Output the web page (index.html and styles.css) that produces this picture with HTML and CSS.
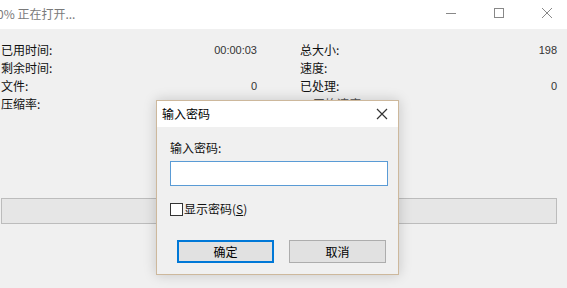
FILE: index.html
```html
<!DOCTYPE html>
<html lang="zh-CN">
<head>
<meta charset="utf-8">
<title>正在打开</title>
<link rel="stylesheet" href="styles.css">
</head>
<body>
<div class="window">
  <div class="titlebar">
    <div class="title">0% 正在打开...</div>
    <div class="controls">
      <span class="ctl"><svg width="12" height="12" viewBox="0 0 12 12"><path d="M1 6.5H11" stroke="#888" stroke-width="1"/></svg></span>
      <span class="ctl"><svg width="12" height="12" viewBox="0 0 12 12"><rect x="1.5" y="1.5" width="9" height="9" fill="none" stroke="#888" stroke-width="1"/></svg></span>
      <span class="ctl"><svg width="12" height="12" viewBox="0 0 12 12"><path d="M1 1L11 11M11 1L1 11" stroke="#888" stroke-width="1"/></svg></span>
    </div>
  </div>
  <div class="stats">
    <div class="col col-left">
      <div class="row"><span class="lbl">已用时间:</span><span class="val">00:00:03</span></div>
      <div class="row"><span class="lbl">剩余时间:</span><span class="val"></span></div>
      <div class="row"><span class="lbl">文件:</span><span class="val">0</span></div>
      <div class="row"><span class="lbl">压缩率:</span><span class="val"></span></div>
    </div>
    <div class="col col-right">
      <div class="row"><span class="lbl">总大小:</span><span class="val">198</span></div>
      <div class="row"><span class="lbl">速度:</span><span class="val"></span></div>
      <div class="row"><span class="lbl">已处理:</span><span class="val">0</span></div>
      <div class="row"><span class="lbl hidden-lbl">平均速度:</span><span class="val"></span></div>
    </div>
  </div>
  <div class="progress"></div>

  <div class="dialog">
    <div class="dlg-title">
      <span>输入密码</span>
      <svg class="dlg-close" width="12" height="12" viewBox="0 0 12 12"><path d="M1 1L11 11M11 1L1 11" stroke="#333" stroke-width="1.2"/></svg>
    </div>
    <div class="dlg-body">
      <div class="dlg-label">输入密码:</div>
      <input class="pwd" type="password" value="">
      <div class="check-row"><span class="checkbox"></span><span>显示密码(<u>S</u>)</span></div>
      <div class="buttons">
        <span class="btn btn-default">确定</span>
        <span class="btn">取消</span>
      </div>
    </div>
  </div>
</div>
</body>
</html>
```

FILE: styles.css
```css
html, body {
  margin: 0;
  padding: 0;
}
body {
  font-family: "Noto Sans CJK SC", "Noto Sans", "Liberation Sans", sans-serif;
  font-size: 12px;
  color: #111;
  background: #f0f0f0;
}
.window {
  position: relative;
  width: 567px;
  height: 288px;
  overflow: hidden;
  background: #f0f0f0;
  display: flex;
  flex-direction: column;
}
.titlebar {
  height: 29px;
  background: #fff;
  display: flex;
  align-items: center;
  justify-content: space-between;
}
.title {
  margin-left: -3px;
  color: #7a7a7a;
  line-height: 18px;
  margin-top: -2px;
}
.controls {
  display: flex;
  margin-right: -4px;
  margin-top: -4px;
}
.ctl {
  width: 48px;
  height: 20px;
  display: flex;
  align-items: center;
  justify-content: center;
}
.stats {
  display: flex;
  margin-top: 12px;
}
.col {
  display: flex;
  flex-direction: column;
}
.col-left {
  width: 256px;
  margin-left: 1px;
}
.col-right {
  width: 257px;
  margin-left: 43px;
}
.row {
  display: flex;
  justify-content: space-between;
  line-height: 18px;
  height: 18px;
}
.hidden-lbl {
  margin-left: 13px;
  color: #555;
}
.val {
  color: #333;
  font-family: "Liberation Sans", "Noto Sans", sans-serif;
  font-size: 11px;
}
.progress {
  margin-top: 85px;
  margin-left: 1px;
  width: 554px;
  height: 24px;
  background: #e6e6e6;
  border: 1px solid #bcbcbc;
}
.dialog {
  position: absolute;
  left: 156px;
  top: 100px;
  width: 241px;
  height: 173px;
  border: 1px solid #cdb89c;
  background: #f0f0f0;
  box-shadow: 0 0 12px rgba(0, 0, 0, 0.18);
  display: flex;
  flex-direction: column;
}
.dlg-title {
  height: 26px;
  background: #fff;
  display: flex;
  align-items: center;
  justify-content: space-between;
  padding: 0 10px 0 5px;
  line-height: 18px;
  color: #000;
}
.dlg-close {
  display: block;
}
.dlg-body {
  display: flex;
  flex-direction: column;
  padding: 12px 11px 0 13px;
}
.dlg-label {
  line-height: 18px;
  height: 18px;
}
.pwd {
  box-sizing: border-box;
  margin: 4px 0 0 0;
  width: 218px;
  height: 25px;
  border: 1px solid #5a9bd5;
  background: #fff;
  outline: none;
  padding: 0 4px;
}
.check-row {
  display: flex;
  align-items: center;
  gap: 1px;
  margin-top: 14px;
  line-height: 18px;
}
.checkbox {
  box-sizing: border-box;
  width: 13px;
  height: 13px;
  border: 1px solid #333;
  background: #fff;
}
.buttons {
  display: flex;
  gap: 15px;
  margin-top: 22px;
  margin-left: 7px;
}
.btn {
  box-sizing: border-box;
  width: 97px;
  height: 23px;
  display: flex;
  align-items: center;
  justify-content: center;
  background: #e1e1e1;
  border: 1px solid #adadad;
  color: #000;
}
.btn-default {
  border: 2px solid #0078d7;
}
```
